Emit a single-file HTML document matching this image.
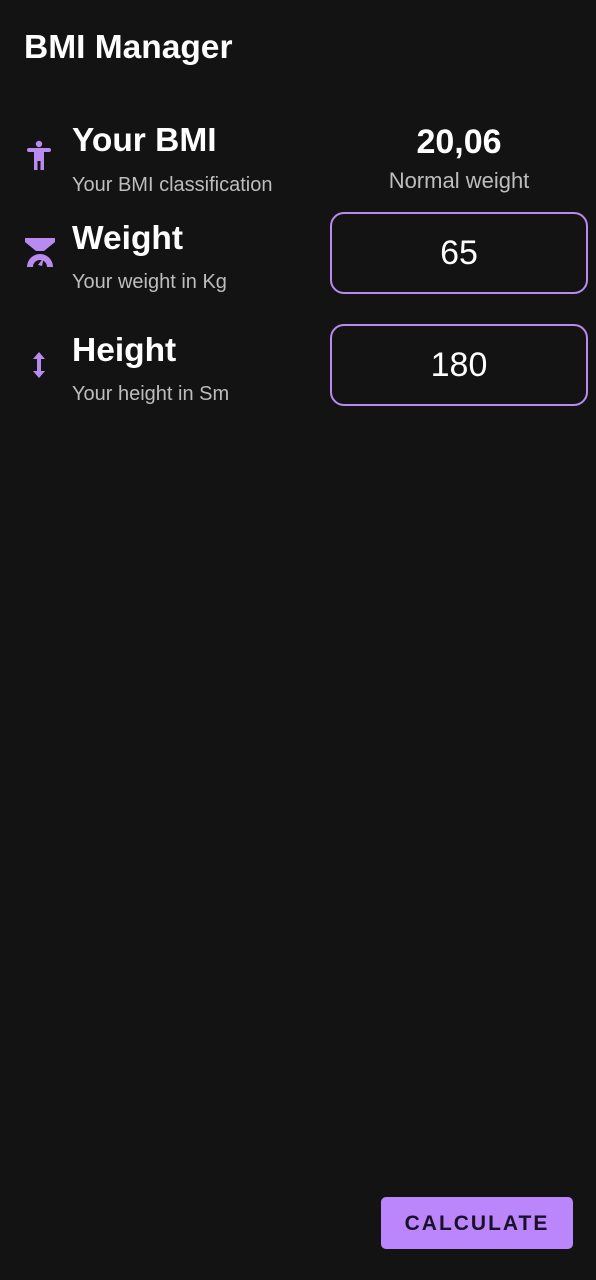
<!DOCTYPE html>
<html><head><style>
html,body{margin:0;padding:0;background:#131313;width:596px;height:1280px;overflow:hidden;font-family:"Liberation Sans",sans-serif;color:#fff}
.abs{position:absolute}
.t{font-weight:bold;font-size:33.5px}
.s{font-size:20px;color:#bdbdbd}
.box{position:absolute;left:330px;height:82px;border:2.5px solid #b98af0;border-radius:14px;box-sizing:border-box;font-size:34px;text-align:center;line-height:78px;width:258px}
</style></head><body>
<div class="abs" style="left:24px;top:29px;font-size:33.5px;font-weight:bold">BMI Manager</div>

<svg class="abs" style="left:26px;top:140px" width="28" height="32" viewBox="0 0 28 32"><circle cx="13" cy="4" r="3.2" fill="#b98af0"/><rect x="1" y="8" width="24" height="4" rx="2" fill="#b98af0"/><rect x="8" y="8" width="10" height="13" fill="#b98af0"/><rect x="8" y="19" width="3.5" height="11" fill="#b98af0"/><rect x="14.5" y="19" width="3.5" height="11" fill="#b98af0"/></svg>
<div class="abs t" style="left:72px;top:122px">Your BMI</div>
<div class="abs s" style="left:72px;top:174px">Your BMI classification</div>
<div class="abs" style="left:374px;top:123px;width:170px;text-align:center;font-size:34px;font-weight:bold">20,06</div>
<div class="abs" style="left:374px;top:168px;width:170px;text-align:center;font-size:22px;color:#bdbdbd">Normal weight</div>

<svg class="abs" style="left:24px;top:237px" width="32" height="32" viewBox="0 0 32 32"><path d="M1 1H31V5L20 14H12L1 5Z" fill="#b98af0"/><path d="M3 30A13 13 0 0 1 29 30H23A7 7 0 0 0 9 30Z" fill="#b98af0"/><path d="M5 30A11 11 0 0 1 27 30" fill="none" stroke="#b98af0" stroke-width="3"/><path d="M14 28L20 20L18 29Z" fill="#b98af0"/></svg>
<div class="abs t" style="left:72px;top:220px">Weight</div>
<div class="abs s" style="left:72px;top:271px">Your weight in Kg</div>
<div class="box" style="top:212px">65</div>

<svg class="abs" style="left:32px;top:351px" width="14" height="28" viewBox="0 0 14 28"><path d="M7 1L1 8H5V20H1L7 27L13 20H9V8H13Z" fill="#b98af0"/></svg>
<div class="abs t" style="left:72px;top:332px">Height</div>
<div class="abs s" style="left:72px;top:383px">Your height in Sm</div>
<div class="box" style="top:324px">180</div>

<div class="abs" style="left:381px;top:1197px;width:192px;height:52px;background:#bb86fc;border-radius:5px;color:#1a1028;font-size:21px;font-weight:bold;letter-spacing:2px;text-align:center;line-height:54px">CALCULATE</div>
</body></html>
